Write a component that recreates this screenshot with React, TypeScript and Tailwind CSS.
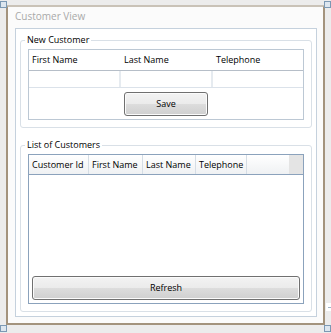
import { FC, ReactNode } from "react";

const Handle: FC<{ className: string }> = ({ className }) => (
  <div
    className={`absolute w-[7px] h-[7px] border border-[#7c99b4] bg-[#dde6ef] ${className}`}
  />
);

const AeroButton: FC<{ children: ReactNode; className?: string }> = ({
  children,
  className = "",
}) => (
  <button
    className={`flex items-center justify-center h-[24px] rounded-[3px] border border-[#707070] bg-[linear-gradient(#f3f3f3_0%,#ebebeb_50%,#dddddd_50%,#cfcfcf_100%)] shadow-[inset_0_0_0_1px_#fbfbfb] text-black ${className}`}
  >
    {children}
  </button>
);

const GroupBox: FC<{ title: string; children: ReactNode; className?: string }> = ({
  title,
  children,
  className = "",
}) => (
  <fieldset
    className={`border border-[#d9e0e7] rounded-[3px] px-[4px] pb-[7px] min-w-0 ${className}`}
  >
    <legend className="px-[2px] leading-[12px] text-black">{title}</legend>
    {children}
  </fieldset>
);

export default function App() {
  const headers = ["Customer Id", "First Name", "Last Name", "Telephone"];
  const widths = ["w-[60px]", "w-[54px]", "w-[53px]", "w-[51px]"];

  return (
    <div className="relative w-[331px] h-[333px] bg-[#ececec] pt-[5px] pl-[6px] font-['Open_Sans',sans-serif] text-[9px] text-black overflow-hidden">
      {/* WINDOW FRAME */}
      <div className="w-[319px] h-[320px] border-2 border-[#a3937d] border-t-[#c9c2b7] bg-[#fbfbfb] pl-[7px] pr-[6px] pb-[6px] flex flex-col">
        <div className="h-[21px] pt-[2px] text-[10px] leading-[14px] text-[#a9a9a9]">
          Customer View
        </div>

        {/* MAIN BORDER */}
        <div className="flex-1 border border-[#c5d1dd] bg-white px-[4px] pt-[5px] pb-[4px] flex flex-col">
          {/* NEW CUSTOMER */}
          <GroupBox title="New Customer">
            <div className="mx-[3px] mt-[3px] border border-[#bcc8d4] flex flex-col">
              <div className="grid grid-cols-[92px_92px_90px] h-[21px] border-b border-[#b6bec8] items-center">
                <span className="pl-[3px]">First Name</span>
                <span className="pl-[3px]">Last Name</span>
                <span className="pl-[3px]">Telephone</span>
              </div>
              <div className="grid grid-cols-[92px_92px_90px] h-[17px] border-b border-[#dbe2ea]">
                <div className="border-r-2 border-[#e6ebf0]" />
                <div className="border-r-2 border-[#e6ebf0]" />
                <div />
              </div>
              <div className="h-[31px] pt-[4px] flex justify-center">
                <AeroButton className="w-[84px]">Save</AeroButton>
              </div>
            </div>
          </GroupBox>

          {/* LIST OF CUSTOMERS */}
          <GroupBox title="List of Customers" className="mt-[11px] flex-1 flex flex-col">
            <div className="mx-[3px] mt-[3px] flex-1 border border-[#8ba2bc] bg-white flex flex-col">
              <div className="flex h-[20px] border-b border-[#8ba2bc] bg-[linear-gradient(#ffffff,#eff1f3)]">
                {headers.map((h, i) => (
                  <div
                    key={h}
                    className={`${widths[i]} border-r border-[#d5dde5] pl-[3px] flex items-center`}
                  >
                    {h}
                  </div>
                ))}
                <div className="flex-1" />
                <div className="w-[14px] bg-[#e4e4e4]" />
              </div>
              <div className="flex-1" />
              <div className="px-[3px] pb-[3px]">
                <AeroButton className="w-full">Refresh</AeroButton>
              </div>
            </div>
          </GroupBox>
        </div>
      </div>

      {/* DESIGNER HANDLES */}
      <Handle className="left-0 top-[1px]" />
      <Handle className="left-[324px] top-[1px]" />
      <Handle className="left-0 top-[325px]" />
      <Handle className="left-[324px] top-[325px]" />
      <div className="absolute left-[326px] top-[303px] w-[5px] h-[8px] bg-white flex items-center">
        <div className="ml-[2px] w-[3px] h-[1px] bg-[#9fb4c8]" />
      </div>
    </div>
  );
}
